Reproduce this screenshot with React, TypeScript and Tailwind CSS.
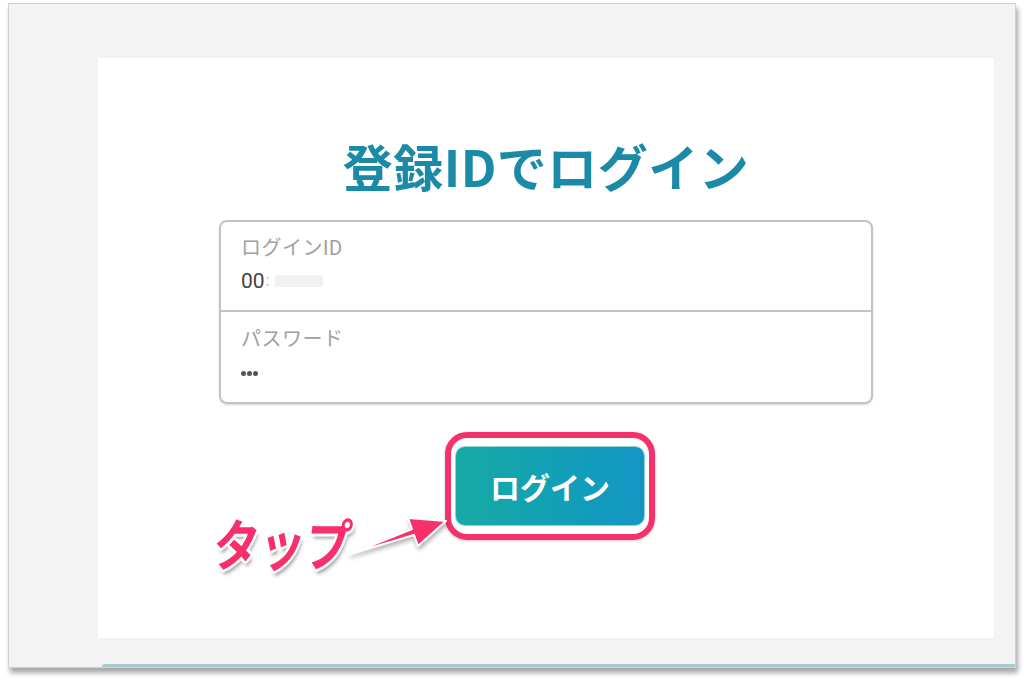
import React from 'react';

const jp = { fontFamily: '"Roboto", "Noto Sans CJK JP", sans-serif' };

function TapArrow() {
  return (
    <svg
      width="120"
      height="64"
      viewBox="0 0 120 64"
      className="absolute left-[340px] top-[505px] drop-shadow-[1px_3px_2px_rgba(0,0,0,0.3)]"
    >
      <polygon
        points="10,49 72,24 68,13 106,16 78,41 74,30"
        fill="#f7306c"
        stroke="#ffffff"
        strokeWidth="2"
        strokeLinejoin="round"
      />
    </svg>
  );
}

export default function App() {
  return (
    <div className="relative w-[1024px] h-[682px] bg-white pl-[8px] pt-[3px]" style={jp}>
      {/* screenshot frame */}
      <div className="w-[1008px] h-[665px] bg-[#f3f3f3] border border-[#d2d2d2] shadow-[2px_5px_5px_rgba(0,0,0,0.35)] pl-[89px] pt-[54px] flex flex-col">
        <div className="w-[896px] h-[581px] bg-white flex flex-col items-center pt-[80px]">
          <h1 className="text-[50px] leading-[54px] font-bold text-[#1b8aa6] tracking-[0.5px]" style={{ fontFamily: '"Noto Sans CJK JP", sans-serif' }}>
            登録IDでログイン
          </h1>

          {/* inputs */}
          <div className="mt-[28px] w-[654px] h-[184px] border-2 border-[#c3c3c3] rounded-[8px] shadow-[0_1px_2px_rgba(0,0,0,0.15)] flex flex-col">
            <div className="h-[88px] px-[20px] pt-[15px]">
              <div className="text-[20px] leading-[22px] text-[#a0a0a0] tracking-[0.5px]">ログインID</div>
              <div className="mt-[10px] flex items-center text-[21px] leading-[24px] text-[#444]">
                <span>00</span>
                <span className="text-[#bbb] text-[16px] ml-[1px]">:</span>
                <span className="ml-[6px] w-[48px] h-[12px] bg-[#f1f1f1] rounded-[2px]" />
              </div>
            </div>
            <div className="h-[2px] bg-[#c3c3c3]" />
            <div className="flex-1 px-[20px] pt-[16px]">
              <div className="text-[20px] leading-[22px] text-[#a0a0a0] tracking-[0.5px]">パスワード</div>
              <div className="mt-[21px] flex gap-[1px]">
                <span className="w-[5px] h-[5px] rounded-full bg-[#555]" />
                <span className="w-[5px] h-[5px] rounded-full bg-[#555]" />
                <span className="w-[5px] h-[5px] rounded-full bg-[#555]" />
              </div>
            </div>
          </div>

          {/* login button with highlight ring */}
          <div className="mt-[28px] ml-[8px] border-[6px] border-[#f5316b] rounded-[22px] px-[4px] py-[8px] bg-white shadow-[0_1px_3px_rgba(0,0,0,0.2)]">
            <button className="w-[190px] h-[80px] rounded-[10px] bg-gradient-to-r from-[#17aaa4] to-[#1396c5] border border-[#8fd3d8] text-white text-[30px] font-bold" style={{ fontFamily: '"Noto Sans CJK JP", sans-serif' }}>
              ログイン
            </button>
          </div>
        </div>
        <div className="mt-[26px] ml-[4px] h-[3px] bg-[#a9c9ce] rounded-tl-[3px]" />
      </div>

      {/* annotation */}
      <span
        className="absolute left-[214px] top-[506px] origin-left scale-x-[0.82] text-[56px] leading-[72px] font-bold text-[#f7306c]"
        style={{ fontFamily: '"Noto Sans CJK JP", sans-serif' }}
      >
        <span
          className="inline-block -skew-x-[8deg]"
          style={{
            textShadow:
              '3px 0 0 #fff, -3px 0 0 #fff, 0 3px 0 #fff, 0 -3px 0 #fff, 2px 2px 0 #fff, -2px -2px 0 #fff, 2px -2px 0 #fff, -2px 2px 0 #fff, 3px 5px 4px rgba(0,0,0,0.35)',
          }}
        >
          タップ
        </span>
      </span>
      <TapArrow />
    </div>
  );
}
